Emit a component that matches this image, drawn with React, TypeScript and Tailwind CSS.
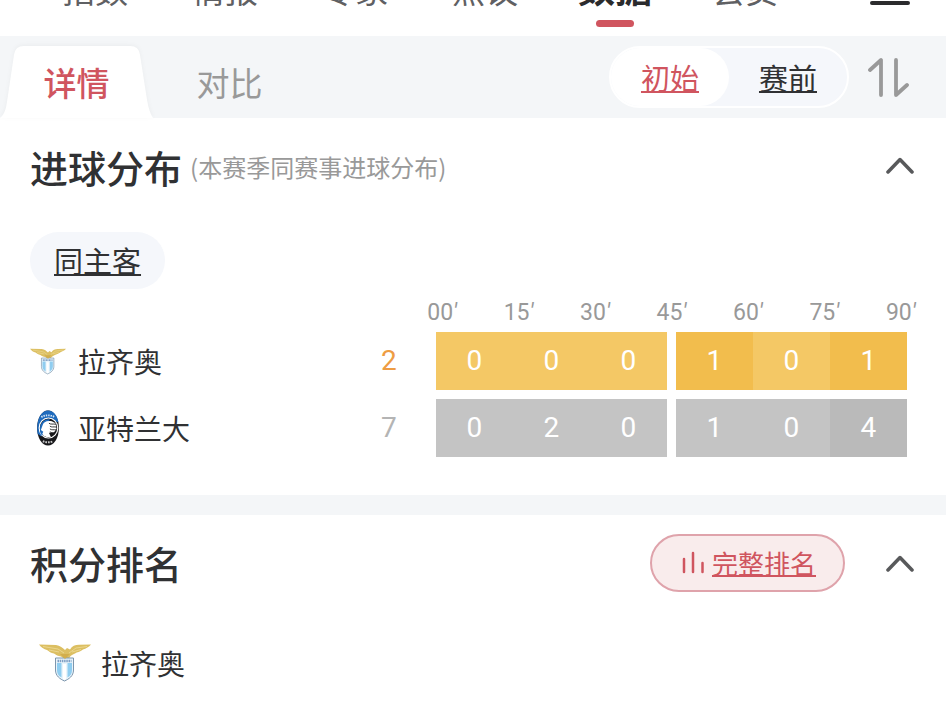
import { useState } from "react";
import clsx from "clsx";

const NAV_TABS = ["指数", "情报", "专家", "热议", "数据", "会员"];
const MINUTES = ["00", "15", "30", "45", "60", "75", "90"];

type TeamRow = {
  name: string;
  side: "home" | "away";
  total: number;
  goals: { count: number; strong?: boolean }[];
};

const ROWS: TeamRow[] = [
  {
    name: "拉齐奥",
    side: "home",
    total: 2,
    goals: [
      { count: 0 },
      { count: 0 },
      { count: 0 },
      { count: 1, strong: true },
      { count: 0 },
      { count: 1, strong: true }
    ]
  },
  {
    name: "亚特兰大",
    side: "away",
    total: 7,
    goals: [
      { count: 0 },
      { count: 2 },
      { count: 0 },
      { count: 1 },
      { count: 0 },
      { count: 4, strong: true }
    ]
  }
];

function LazioCrest({ className }: { className: string }) {
  return (
    <svg viewBox="0 0 52 38" className={className} aria-hidden="true">
      <path
        d="M0 0.500 L17 1 C21 1.500 24 4 26 6 L28 4 L31 5.500 C33 2 36 1 40 0.800 L52 0.500 C50 3 47 4.500 44 5.500 C41 8 38 8 36 9.500 C33 11 31 11.500 30 15 L25 14.500 L22 12.500 C19 12 17 11 15 9.500 C12 9 10 7.500 8 6 C5 5 2 3.500 0 0.500 Z"
        fill="#dcbf62"
      />
      <path
        d="M4 2.500 L19 5 L25 9 M10 6 L20 8 M48 2.500 L37 4 L30 9 M42 5.500 L33 8"
        stroke="#efdc98"
        strokeWidth="0.800"
        fill="none"
      />
      <path
        d="M16.500 14 H34.500 V26 C34.500 32 30 35 25.500 37 C21 35 16.500 32 16.500 26 Z"
        fill="#e9f4fb"
        stroke="#7d96ad"
        strokeWidth="1"
      />
      <path d="M18 19 H22.500 V33.500 C19 31.500 18 29 18 26 Z" fill="#8fcdf0" />
      <path d="M28.500 19 H33 V26 C33 29 32 31.500 28.500 33.500 Z" fill="#8fcdf0" />
      <path d="M24 20 H27 V35 L25.500 36 L24 35 Z" fill="#ffffff" />
      <path
        d="M18.500 17 H32.500"
        stroke="#7f9fc4"
        strokeWidth="2.500"
        strokeDasharray="1.500 0.700"
      />
      <path d="M21 10 L26 15 L31 10 Z" fill="#d2ae4c" />
    </svg>
  );
}

function AtalantaCrest({ className }: { className: string }) {
  return (
    <svg viewBox="0 0 24 38" className={className} aria-hidden="true">
      <ellipse cx="12" cy="19" rx="11.500" ry="18.500" fill="#17171a" />
      <path
        d="M1 25 C-1 10 5 0.500 12 0.500 C18 0.500 22 6 23 13 L12 10 L5 28 Z"
        fill="#1f6bbd"
      />
      <path
        d="M5 7.500 C9 5 15 5 19 7.500"
        stroke="#d5e5f4"
        strokeWidth="2"
        strokeDasharray="1.500 1"
        fill="none"
      />
      <ellipse
        cx="12.500"
        cy="19"
        rx="9.800"
        ry="10.500"
        fill="#17171a"
        stroke="#ffffff"
        strokeWidth="1.200"
      />
      <path
        d="M3.500 20 C3.500 13 8 9.500 14 9.500 L11 17 L6 27 C4 25 3.500 23 3.500 20 Z"
        fill="#1f6bbd"
      />
      <path
        d="M6 17 C7 12.500 11 11 16 12 L20 14 L21 20 L18 24 L13 24 L15 28.500 C10 29 7 27.500 6 25 L7 23 L4.500 21 Z"
        fill="#ffffff"
      />
      <path
        d="M13 14 C15 15.500 17 14.500 20.500 15 M14 17 C16 18.500 17 17.500 21 18 M14 20 C16 21.500 18 20.500 21 21 M14 23 C16 24.500 17 23.500 19 24"
        stroke="#17171a"
        strokeWidth="0.900"
        fill="none"
      />
      <path
        d="M6.500 33 C10 34.500 14 34.500 17.500 33"
        stroke="#c9c9c9"
        strokeWidth="2.200"
        strokeDasharray="1.800 1"
        fill="none"
      />
    </svg>
  );
}

function CollapseButton({ label }: { label: string }) {
  return (
    <button type="button" aria-label={label}>
      <svg viewBox="0 0 28 18" className="h-[18px] w-7" fill="none">
        <path
          d="M2 16 L14 3.500 L26 16"
          stroke="#58595b"
          strokeWidth="3.500"
          strokeLinecap="round"
          strokeLinejoin="round"
        />
      </svg>
    </button>
  );
}

function cellColor(side: TeamRow["side"], strong?: boolean) {
  if (side === "home") return strong ? "bg-[#f2bd4d]" : "bg-[#f4c865]";
  return strong ? "bg-[#bababa]" : "bg-[#c4c4c4]";
}

function GoalTable() {
  return (
    <table className="w-full table-fixed border-separate border-spacing-x-0 border-spacing-y-[9px]">
      <colgroup>
        <col />
        <col className="w-[94px]" />
        <col className="w-[77px]" />
        <col className="w-[77px]" />
        <col className="w-[77px]" />
        <col className="w-[9px]" />
        <col className="w-[77px]" />
        <col className="w-[77px]" />
        <col className="w-[77px]" />
      </colgroup>
      <thead>
        <tr>
          <td colSpan={2} />
          <th colSpan={7} className="p-0 font-normal">
            <div className="-mr-9 -ml-8 grid grid-cols-7 pt-1 pr-1 text-center font-['Roboto','Noto_Sans_CJK_SC',sans-serif] text-[23px] leading-[21px] text-[#999999]">
              {MINUTES.map((m) => (
                <span key={m}>
                  {m}
                  <i>′</i>
                </span>
              ))}
            </div>
          </th>
        </tr>
      </thead>
      <tbody>
        {ROWS.map((row) => (
          <tr key={row.name} className="h-[58px]">
            <th scope="row" className="p-0 text-left font-normal">
              <div className="flex items-center gap-3 text-[28px] leading-none">
                <span className="flex w-9 justify-center">
                  {row.side === "home" ? (
                    <LazioCrest className="h-[27px] w-9" />
                  ) : (
                    <AtalantaCrest className="h-9 w-6" />
                  )}
                </span>
                {row.name}
              </div>
            </th>
            <td
              className={clsx(
                "p-0 text-center font-['Roboto','Noto_Sans_CJK_SC',sans-serif] text-[28px] leading-none",
                row.side === "home" ? "text-[#ee9c43]" : "text-[#b4b4b4]"
              )}
            >
              {row.total}
            </td>
            {row.goals.flatMap((g, idx) => {
              const cell = (
                <td
                  key={idx}
                  className={clsx(
                    "p-0 text-center font-['Roboto','Noto_Sans_CJK_SC',sans-serif] text-[28px] leading-none text-white",
                    cellColor(row.side, g.strong)
                  )}
                >
                  {g.count}
                </td>
              );
              // half-time gap before the fourth interval
              return idx === 3 ? [<td key="half" className="p-0" />, cell] : [cell];
            })}
          </tr>
        ))}
      </tbody>
    </table>
  );
}

export default function App() {
  const [nav, setNav] = useState("数据");
  const [odds, setOdds] = useState("初始");

  return (
    <div className="min-h-screen overflow-hidden bg-white font-['Noto_Sans_CJK_SC',sans-serif] text-[#303133]">
      <header className="flex h-9 items-end overflow-hidden pr-9 pl-[30px]">
        <nav className="flex">
          {NAV_TABS.map((tab) => (
            <button
              key={tab}
              type="button"
              onClick={() => setNav(tab)}
              className="flex w-[130px] flex-col items-center justify-end gap-3.5 pb-[9px] leading-none"
            >
              <span
                className={
                  nav === tab
                    ? "text-[37px] font-bold text-[#2b2b2d]"
                    : "text-[33px] text-[#5f6063]"
                }
              >
                {tab}
              </span>
              <span
                className={clsx(
                  "h-[7px] w-[38px] rounded-full",
                  nav === tab && "bg-[#d0555f]"
                )}
              />
            </button>
          ))}
        </nav>
        <button type="button" aria-label="菜单" className="ml-auto pb-[31px]">
          <svg viewBox="0 0 40 28" className="h-7 w-10" fill="none">
            <path
              d="M2 2 H38 M2 14 H38 M2 26 H38"
              stroke="#2b2b2d"
              strokeWidth="4"
              strokeLinecap="round"
            />
          </svg>
        </button>
      </header>

      <div className="flex items-start bg-[#f4f6f8] pt-2.5 pr-[37px]">
        <button
          type="button"
          className="relative h-[72px] w-[153px] text-[33px] leading-none font-medium text-[#d0555f]"
        >
          <svg
            viewBox="0 0 153 72"
            className="absolute inset-0 h-full w-full drop-shadow-[0_-1px_2px_rgba(0,0,0,0.04)]"
            aria-hidden="true"
          >
            <path
              d="M0 72 C5 68 6 62 7 56 L14 9 Q15 0 24 0 H130 Q139 0 140 9 L147 54 Q149 66 153 72 Z"
              fill="#ffffff"
            />
          </svg>
          <span className="relative">详情</span>
        </button>
        <button
          type="button"
          className="h-[72px] w-[153px] text-[33px] leading-none text-[#999999]"
        >
          对比
        </button>

        <div className="ml-auto flex h-[62px] w-60 rounded-full border-2 border-white bg-[#f5f7fb]">
          {["初始", "赛前"].map((item) => (
            <button
              key={item}
              type="button"
              onClick={() => setOdds(item)}
              className={clsx(
                "flex-1 rounded-full text-[29px] leading-none underline decoration-2 underline-offset-1",
                odds === item ? "bg-white text-[#d0555f]" : "text-[#303133]"
              )}
            >
              {item}
            </button>
          ))}
        </div>
        <button type="button" aria-label="排序" className="ml-[18px] flex h-[62px] items-center">
          <svg viewBox="0 0 42 40" className="h-10 w-[42px]" fill="none">
            <path
              d="M3 13 L14 3 V38 M29 3 V38 L40 28"
              stroke="#999999"
              strokeWidth="3.800"
              strokeLinecap="round"
              strokeLinejoin="round"
            />
          </svg>
        </button>
      </div>

      <section className="pb-[29px]">
        <div className="flex h-[98px] items-center pr-8 pl-[30px]">
          <h2 className="text-[38px] leading-none font-medium">进球分布</h2>
          <span className="ml-2 text-[24px] leading-none text-[#999999]">
            (本赛季同赛事进球分布)
          </span>
          <div className="ml-auto">
            <CollapseButton label="收起进球分布" />
          </div>
        </div>
        <div className="flex pt-4 pl-[30px]">
          <button
            type="button"
            className="h-[57px] rounded-full bg-[#f5f7fb] px-6 text-[29px] leading-none underline decoration-2 underline-offset-1"
          >
            同主客
          </button>
        </div>
        <div className="pr-[39px] pl-[30px]">
          <GoalTable />
        </div>
      </section>

      <section className="border-t-[20px] border-[#f4f6f8]">
        <div className="flex h-24 items-center pr-8 pl-[30px]">
          <h2 className="text-[38px] leading-none font-medium">积分排名</h2>
          <button
            type="button"
            className="mr-[41px] ml-auto flex h-[58px] items-center gap-2 rounded-full border-2 border-[#dfa3ab] bg-[#f9ecec] pr-[27px] pl-7 text-[26px] leading-none text-[#d0555f]"
          >
            <svg viewBox="0 0 24 24" className="h-6 w-6" fill="none" aria-hidden="true">
              <path
                d="M4 8 V21 M13 2 V21 M22.500 12 V21"
                stroke="#d0555f"
                strokeWidth="2.500"
                strokeLinecap="round"
              />
            </svg>
            <span className="underline decoration-2 underline-offset-1">完整排名</span>
          </button>
          <CollapseButton label="收起积分排名" />
        </div>
        <div className="flex h-[103px] items-center gap-2.5 pl-[39px] text-[28px] leading-none">
          <LazioCrest className="h-[38px] w-[52px]" />
          <span>拉齐奥</span>
        </div>
      </section>
    </div>
  );
}
